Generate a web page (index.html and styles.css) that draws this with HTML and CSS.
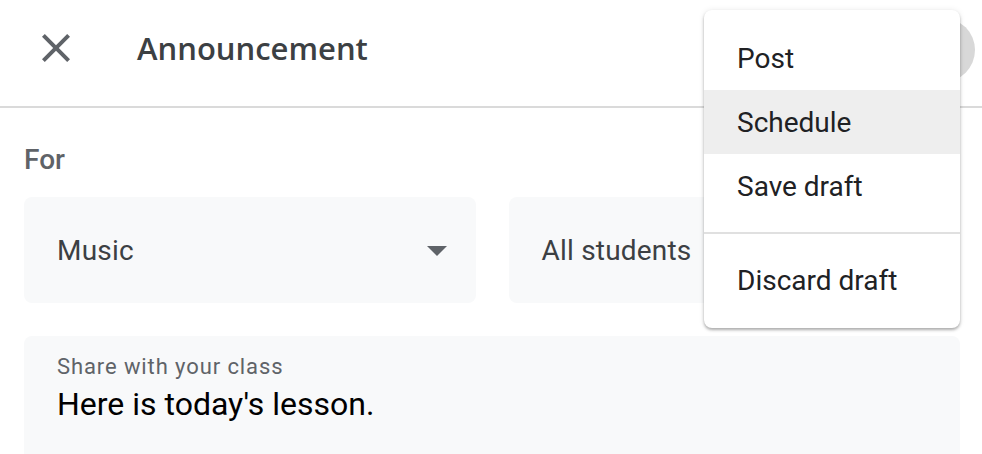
FILE: index.html
```html
<!DOCTYPE html>
<html lang="en">
<head>
<meta charset="utf-8">
<title>Announcement</title>
<link rel="stylesheet" href="styles.css">
</head>
<body>
<header class="topbar">
  <button class="close-btn" aria-label="Close">
    <svg viewBox="0 0 24 24" width="48" height="48"><path fill="#5f6368" d="M19 6.41L17.59 5 12 10.59 6.41 5 5 6.41 10.59 12 5 17.59 6.41 19 12 13.41 17.59 19 19 17.59 13.41 12z"/></svg>
  </button>
  <h1 class="title">Announcement</h1>
  <span class="avatar"></span>
</header>
<main class="content">
  <div class="for-label">For</div>
  <div class="selectors">
    <div class="select">
      <span class="select-text">Music</span>
      <span class="caret"></span>
    </div>
    <div class="select">
      <span class="select-text">All students</span>
    </div>
  </div>
  <div class="share">
    <div class="share-label">Share with your class</div>
    <div class="share-text">Here is today's lesson.</div>
  </div>
</main>
<div class="menu" role="menu">
  <div class="menu-item">Post</div>
  <div class="menu-item is-active">Schedule</div>
  <div class="menu-item">Save draft</div>
  <div class="menu-divider"></div>
  <div class="menu-item">Discard draft</div>
</div>
</body>
</html>
```

FILE: styles.css
```css
* { box-sizing: border-box; }

body {
  margin: 0;
  font-family: Roboto, "Liberation Sans", Arial, sans-serif;
  background: #ffffff;
  color: #202124;
  overflow: hidden;
}

.topbar {
  position: relative;
  height: 108px;
  padding-bottom: 10px;
  border-bottom: 2px solid #dadada;
  display: flex;
  align-items: center;
}

.close-btn {
  margin-left: 32px;
  width: 48px;
  height: 48px;
  padding: 0;
  border: 0;
  background: none;
  display: flex;
}

.title {
  margin: 0 0 0 57px;
  font-family: "Open Sans", Roboto, sans-serif;
  font-weight: 600;
  font-size: 31px;
  color: #3c4043;
  letter-spacing: 0;
}

.avatar {
  position: absolute;
  left: 911px;
  top: 18px;
  width: 64px;
  height: 64px;
  border-radius: 50%;
  background: #d8d8d8;
}

.content {
  padding: 36px 22px 0 24px;
}

.for-label {
  font-size: 28px;
  line-height: 32px;
  font-weight: 500;
  color: #5f6368;
}

.selectors {
  margin-top: 21px;
  display: grid;
  grid-template-columns: 1fr 1fr;
  gap: 33px;
}

.select {
  height: 106px;
  border-radius: 8px;
  background: #f8f9fa;
  display: flex;
  align-items: center;
  justify-content: space-between;
  padding: 0 29px 0 33px;
}

.select-text {
  font-size: 28px;
  letter-spacing: 0.2px;
  color: #3c4043;
}

.caret {
  width: 0;
  height: 0;
  margin-top: 2px;
  border-left: 10px solid transparent;
  border-right: 10px solid transparent;
  border-top: 10px solid #5f6368;
}

.share {
  margin-top: 33px;
  height: 140px;
  border-radius: 8px 8px 0 0;
  background: #f8f9fa;
  padding: 17px 33px 0;
}

.share-label {
  font-size: 22px;
  line-height: 28px;
  letter-spacing: 0.9px;
  color: #5f6368;
}

.share-text {
  margin-top: 2px;
  font-size: 32px;
  line-height: 42px;
  color: #000000;
}

.menu {
  position: absolute;
  left: 704px;
  top: 10px;
  width: 256px;
  padding: 16px 0;
  background: #ffffff;
  border-radius: 8px;
  box-shadow: 0 2px 3px rgba(0, 0, 0, 0.3), 0 0 6px rgba(0, 0, 0, 0.08);
}

.menu-item {
  height: 64px;
  display: flex;
  align-items: center;
  padding-left: 33px;
  font-size: 28px;
  color: #202124;
}

.menu-item.is-active {
  background: #eeeeee;
}

.menu-divider {
  height: 2px;
  margin: 14px 0;
  background: #e0e0e0;
}
```
